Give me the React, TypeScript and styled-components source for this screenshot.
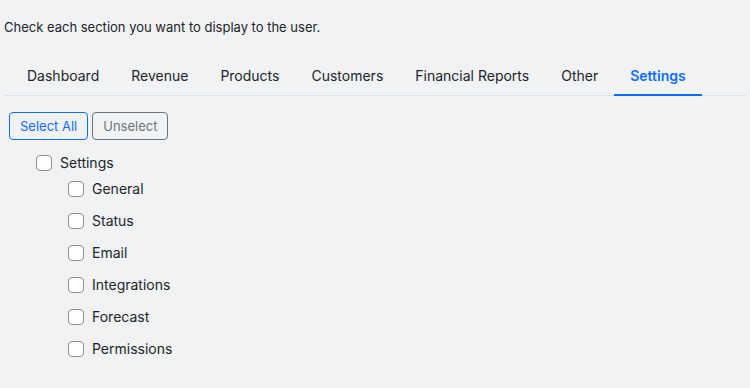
import styled, { createGlobalStyle } from "styled-components";

const GlobalStyle = createGlobalStyle`
    body {
        margin: 0;
        background: #f1f2f4;
        font-family: Inter, "Noto Sans", sans-serif;
        color: #212529;
    }
`;

const tabs = ["Dashboard", "Revenue", "Products", "Customers", "Financial Reports", "Other", "Settings"];
const items = ["General", "Status", "Email", "Integrations", "Forecast", "Permissions"];

export default function App() {
    return (
        <>
            <GlobalStyle />
            <Page>
                <Intro>Check each section you want to display to the user.</Intro>
                <TabBar>
                    {tabs.map((t) => (
                        <Tab key={t} $active={t === "Settings"}>{t}</Tab>
                    ))}
                </TabBar>
                <ButtonRow>
                    <SelectButton>Select All</SelectButton>
                    <UnselectButton>Unselect</UnselectButton>
                </ButtonRow>
                <Tree>
                    <ParentRow>
                        <Box type="checkbox" />
                        <span>Settings</span>
                    </ParentRow>
                    <Children>
                        {items.map((i) => (
                            <ChildRow key={i}>
                                <Box type="checkbox" />
                                <span>{i}</span>
                            </ChildRow>
                        ))}
                    </Children>
                </Tree>
            </Page>
        </>
    );
}

const Page = styled.div`
    padding: 18px 4px 0 4px;
`;

const Intro = styled.p`
    margin: 0;
    font-size: 13px;
    line-height: 18px;
`;

const TabBar = styled.div`
    display: flex;
    margin-top: 20px;
    padding-left: 7px;
    border-bottom: 1px solid #dee2e6;
`;

const Tab = styled.div<{ $active?: boolean }>`
    padding: 10px 16px 8px;
    font-size: 14px;
    line-height: 20px;
    font-weight: ${(p) => (p.$active ? 600 : 400)};
    color: ${(p) => (p.$active ? "#0d6efd" : "#212529")};
    border-bottom: 2px solid ${(p) => (p.$active ? "#0d6efd" : "transparent")};
    margin-bottom: -1px;
`;

const ButtonRow = styled.div`
    display: flex;
    gap: 4px;
    margin: 16px 0 0 5px;
`;

const BaseButton = styled.button`
    font-family: Inter, "Noto Sans", sans-serif;
    font-size: 13px;
    line-height: 18px;
    height: 28px;
    padding: 4px 10px;
    background: transparent;
    border-radius: 4px;
    cursor: pointer;
`;

const SelectButton = styled(BaseButton)`
    color: #0d6efd;
    border: 1px solid #0d6efd;
`;

const UnselectButton = styled(BaseButton)`
    color: #6c757d;
    border: 1px solid #6c757d;
`;

const Tree = styled.div`
    margin: 13px 0 0 32px;
    font-size: 14px;
`;

const Row = styled.label`
    display: flex;
    align-items: center;
    gap: 8px;
    height: 20px;
    line-height: 20px;
`;

const ParentRow = styled(Row)``;

const Children = styled.div`
    display: flex;
    flex-direction: column;
    gap: 12px;
    margin: 6px 0 0 32px;
`;

const ChildRow = styled(Row)``;

const Box = styled.input`
    appearance: none;
    margin: 0;
    width: 16px;
    height: 16px;
    border: 1px solid #8a8d91;
    border-radius: 4px;
    background: #fff;
`;
